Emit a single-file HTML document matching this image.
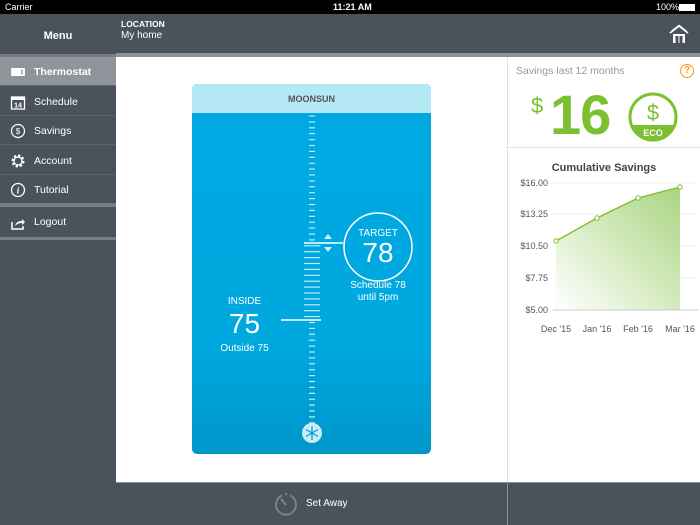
<!DOCTYPE html>
<html><head><meta charset="utf-8"><style>
*{margin:0;padding:0;box-sizing:border-box}
body{width:700px;height:525px;overflow:hidden;font-family:"Liberation Sans",sans-serif;background:#fff;position:relative}
.abs{position:absolute}
.status{left:0;top:0;width:700px;height:14px;background:#000;color:#fff;font-size:9px;line-height:14px}
.side{left:0;top:14px;width:116px;height:511px;background:#4a535b}
.row{position:absolute;left:0;width:116px;height:29px;color:#fff;font-size:10.5px;line-height:30px;padding-left:34px;border-bottom:1px solid #5d666d}
.ic{position:absolute;left:10px;top:7px;width:16px;height:16px}
</style></head><body>
<div class="abs status"><span style="position:absolute;left:5px">Carrier</span><span style="position:absolute;left:333px;font-weight:bold">11:21 AM</span><span style="position:absolute;left:656px">100%</span><span style="position:absolute;left:679px;top:4px;width:16px;height:7px;background:#fff"></span></div>
<div class="abs side">
 <div style="position:absolute;left:0;top:0;width:116px;height:41px;color:#fff;font-weight:bold;font-size:11px;text-align:center;line-height:44px">Menu</div>
 <div style="position:absolute;top:40px;left:0;width:116px;height:3px;background:#777d82"></div>
</div>
<div class="row" style="top:57px;background:#8f959b;font-weight:bold"><svg class="ic" viewBox="0 0 16 16"><rect x="1" y="4" width="14" height="8" rx="1.5" fill="#fff"/><rect x="11" y="6" width="2" height="1.5" fill="#8f959b"/><rect x="11" y="8.5" width="2" height="1.5" fill="#8f959b"/></svg>Thermostat</div>
<div class="row" style="top:87px"><svg class="ic" viewBox="0 0 16 16"><rect x="1.5" y="3" width="13" height="12" fill="none" stroke="#fff" stroke-width="1.3"/><rect x="1.5" y="3" width="13" height="3" fill="#fff"/><text x="8" y="13.5" font-size="7" fill="#fff" text-anchor="middle" font-weight="bold" font-family="Liberation Sans">14</text></svg>Schedule</div>
<div class="row" style="top:116px"><svg class="ic" viewBox="0 0 16 16"><circle cx="8" cy="8" r="6.5" fill="none" stroke="#fff" stroke-width="1.2"/><text x="8" y="11" font-size="8" fill="#fff" text-anchor="middle" font-family="Liberation Sans">$</text></svg>Savings</div>
<div class="row" style="top:146px"><svg class="ic" viewBox="0 0 16 16"><circle cx="8" cy="8" r="5" fill="none" stroke="#fff" stroke-width="3" stroke-dasharray="2.2 1.7"/><circle cx="8" cy="8" r="4" fill="none" stroke="#fff" stroke-width="1.3"/></svg>Account</div>
<div class="row" style="top:175px;border-bottom:4px solid #777d82;height:32px"><svg class="ic" viewBox="0 0 16 16"><circle cx="8" cy="8" r="6.5" fill="none" stroke="#fff" stroke-width="1.3"/><text x="8" y="11.5" font-size="9" fill="#fff" text-anchor="middle" font-style="italic" font-weight="bold" font-family="Liberation Serif">i</text></svg>Tutorial</div>
<div class="row" style="top:208px;border-bottom:3px solid #777d82;height:32px;line-height:29px"><svg class="ic" viewBox="0 0 16 16"><path d="M2 7v7h11v-3" fill="none" stroke="#fff" stroke-width="1.5"/><path d="M5 11c1-4 4-5 7-5V4l3 3-3 3V8c-3 0-5 1-7 3z" fill="#fff"/></svg>Logout</div>
<div class="abs" style="left:116px;top:14px;width:584px;height:39px;background:#4a535b;color:#fff">
 <div style="position:absolute;left:5px;top:5px;font-size:8.5px;font-weight:bold">LOCATION</div>
 <div style="position:absolute;left:5px;top:16px;font-size:10px">My home</div>
 <svg style="position:absolute;left:552px;top:9px" width="22" height="22" viewBox="0 0 22 22"><path d="M2 10L11 3l9 7M4 8L11 2.5 18 8" fill="none" stroke="#fff" stroke-width="1.6"/><path d="M5 11h12v9H5z" fill="#fff"/><rect x="7.5" y="13" width="3" height="7" fill="#4a535b"/><rect x="11.5" y="13" width="3" height="7" fill="#4a535b"/></svg>
</div>
<div class="abs" style="left:116px;top:53px;width:584px;height:4px;background:#8d9296"></div>
<div class="abs" style="left:507px;top:57px;width:1px;height:425px;background:#e3e3e3"></div>
<div class="abs" style="left:508px;top:147px;width:192px;height:1px;background:#e3e3e3"></div>
<!-- card -->
<div class="abs" style="left:192px;top:84px;width:239px;height:370px;border-radius:5px;overflow:hidden;background:linear-gradient(#00a9e2 0%,#00a8e0 70%,#0096c9 100%)">
 <div style="height:29px;background:#b3e8f4;color:#555;font-size:9px;font-weight:bold;text-align:center;line-height:30px">MOONSUN</div>
 <svg style="position:absolute;left:0;top:0" width="239" height="370">
  <g id="t" stroke="#cdeffa" stroke-width="1.1"></g>
  <line x1="112" y1="159" x2="151" y2="159" stroke="#fff" stroke-width="1.5"/>
  <line x1="89" y1="236" x2="129" y2="236" stroke="#fff" stroke-width="1.5"/>
  <path d="M136 150l4 5h-8z M132 163h8l-4 5z" fill="#cdeffa"/>
  <circle cx="186" cy="163" r="34" fill="none" stroke="#fff" stroke-width="1.5"/>
  <circle cx="120" cy="349" r="10" fill="#c9ecf8"/>
  <g stroke="#00a0d8" stroke-width="1.3"><line x1="120" y1="342" x2="120" y2="356"/><line x1="114" y1="345.5" x2="126" y2="352.5"/><line x1="114" y1="352.5" x2="126" y2="345.5"/></g>
 </svg>
 <div style="position:absolute;left:152px;top:144px;width:68px;text-align:center;color:#fff;font-size:10px">TARGET</div>
 <div style="position:absolute;left:152px;top:153px;width:68px;text-align:center;color:#fff;font-size:28px">78</div>
 <div style="position:absolute;left:136px;top:196px;width:100px;text-align:center;color:#fff;font-size:10px;line-height:12px">Schedule 78<br>until 5pm</div>
 <div style="position:absolute;left:20px;top:212px;width:65px;text-align:center;color:#fff;font-size:10px">INSIDE</div>
 <div style="position:absolute;left:20px;top:224px;width:65px;text-align:center;color:#fff;font-size:28px">75</div>
 <div style="position:absolute;left:15px;top:259px;width:75px;text-align:center;color:#fff;font-size:10px">Outside 75</div>
</div>
<script>
var g=document.getElementById('t'),s='';
for(var y=116;y<=426;y+=5.9){var yy=y-84;if(yy>159&&yy<236){s+='<line x1="112" y1="'+yy+'" x2="128" y2="'+yy+'"/>';}else{s+='<line x1="117" y1="'+yy+'" x2="123" y2="'+yy+'"/>';}}
g.innerHTML=s;
</script>
<!-- savings -->
<div class="abs" style="left:516px;top:65px;color:#999;font-size:10.5px">Savings last 12 months</div>
<div class="abs" style="left:680px;top:64px;width:14px;height:14px;border:1.5px solid #f39a1e;border-radius:50%;color:#f39a1e;font-size:10px;font-weight:bold;text-align:center;line-height:12px">?</div>
<div class="abs" style="left:531px;top:93px;color:#7cbf30;font-size:22px">$</div>
<div class="abs" style="left:550px;top:82px;color:#7cbf30;font-size:56px;font-weight:bold;letter-spacing:-1px;line-height:66px">16</div>
<svg class="abs" style="left:628px;top:92px" width="50" height="50" viewBox="0 0 50 50"><circle cx="25" cy="25" r="23" fill="#fff" stroke="#7cbf30" stroke-width="3"/><path d="M4 33h42a23 23 0 0 1-42 0z" fill="#7cbf30"/><text x="25" y="28" font-size="22" fill="#7cbf30" text-anchor="middle" font-family="Liberation Sans">$</text><text x="25" y="44" font-size="9" fill="#fff" font-weight="bold" text-anchor="middle" font-family="Liberation Sans">ECO</text></svg>
<div class="abs" style="left:508px;top:162px;width:192px;text-align:center;color:#444;font-size:11px;font-weight:bold">Cumulative Savings</div>
<svg class="abs" style="left:508px;top:170px" width="192" height="170">
 <defs><linearGradient id="gr" x1="1" y1="0" x2="0" y2="1"><stop offset="0" stop-color="#a9d57f"/><stop offset="1" stop-color="#fff"/></linearGradient></defs>
 <g stroke="#f0f0f0"><line x1="45" y1="13" x2="190" y2="13"/><line x1="45" y1="44" x2="190" y2="44"/><line x1="45" y1="76" x2="190" y2="76"/><line x1="45" y1="108" x2="190" y2="108"/></g>
 <path d="M48 71L89 48L130 28L172 17V140H48z" fill="url(#gr)"/>
 <path d="M48 71L89 48L130 28L172 17" fill="none" stroke="#7cbf30" stroke-width="1.3"/>
 <g fill="#fff" stroke="#7cbf30"><circle cx="48" cy="71" r="2.2"/><circle cx="89" cy="48" r="2.2"/><circle cx="130" cy="28" r="2.2"/><circle cx="172" cy="17" r="2.2"/></g>
 <line x1="45" y1="140" x2="190" y2="140" stroke="#ccc"/>
 <g font-size="9" fill="#555" font-family="Liberation Sans" text-anchor="end"><text x="40" y="16">$16.00</text><text x="40" y="47">$13.25</text><text x="40" y="79">$10.50</text><text x="40" y="111">$7.75</text><text x="40" y="143">$5.00</text></g>
 <g font-size="9" fill="#555" font-family="Liberation Sans" text-anchor="middle"><text x="48" y="162">Dec '15</text><text x="89" y="162">Jan '16</text><text x="130" y="162">Feb '16</text><text x="172" y="162">Mar '16</text></g>
</svg>
<!-- bottom -->
<div class="abs" style="left:116px;top:482px;width:584px;height:43px;background:#4a535b;border-top:1px solid #8d9296"></div>
<div class="abs" style="left:507px;top:482px;width:1px;height:43px;background:#8d9296"></div>
<svg class="abs" style="left:274px;top:492px" width="24" height="24" viewBox="0 0 24 24"><path d="M8 3.5A10 10 0 1 0 16 3.5" fill="none" stroke="#7d8286" stroke-width="2"/><line x1="7" y1="7" x2="12" y2="13" stroke="#7d8286" stroke-width="2"/><circle cx="12" cy="2" r="1.2" fill="#7d8286"/></svg>
<div class="abs" style="left:306px;top:498px;color:#fff;font-size:10px">Set Away</div>
</body></html>
